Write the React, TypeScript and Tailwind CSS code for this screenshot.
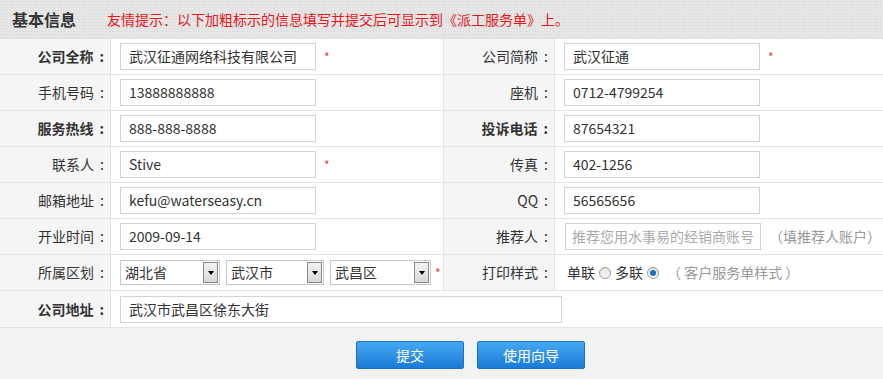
import type { ReactNode } from 'react'

const font = "font-['Microsoft_YaHei','Noto_Sans_CJK_SC',sans-serif]"

function Label({ children, bold }: { children: ReactNode; bold?: boolean }) {
  return (
    <div
      className={`flex items-center justify-end bg-[#f5f5f5] pr-[4px] text-[14px] text-[#333] ${bold ? 'font-bold' : ''}`}
    >
      {children}
      <span className="ml-[6px] mr-[2px]">:</span>
    </div>
  )
}

function Field({ value, star, placeholder }: { value?: string; star?: boolean; placeholder?: string }) {
  return (
    <div className="flex items-center bg-white pl-[9px]">
      <div className="flex h-[27px] w-[196px] items-center border border-[#d3d3d3] bg-white pl-[8px] text-[14px] text-[#333]">
        {value ?? <span className="text-[#aaa]">{placeholder}</span>}
      </div>
      {star && <span className="ml-[8px] text-[12px] text-[#e04040]">*</span>}
    </div>
  )
}

function Select({ value, w }: { value: string; w: string }) {
  return (
    <div className={`flex h-[25px] items-center justify-between border border-[#c8c8c8] bg-white pl-[4px] text-[14px] text-[#333] ${w}`}>
      <span>{value}</span>
      <span className="mr-[1px] flex h-[21px] w-[15px] items-center justify-center border border-[#888] bg-gradient-to-b from-[#f4f4f4] to-[#d8d8d8]">
        <span className="h-0 w-0 border-x-[3.5px] border-t-[4px] border-x-transparent border-t-black" />
      </span>
    </div>
  )
}

function Radio({ checked }: { checked?: boolean }) {
  return (
    <span className="mx-[4px] inline-flex h-[12px] w-[12px] items-center justify-center rounded-full border border-[#9a9a9a] bg-gradient-to-b from-[#e2e2e2] to-[#fafafa]">
      {checked && <span className="h-[6px] w-[6px] rounded-full bg-[#1c6fc0]" />}
    </span>
  )
}

const rows: [string, string, boolean, boolean, string, string, boolean, boolean][] = [
  ['公司全称', '武汉征通网络科技有限公司', true, true, '公司简称', '武汉征通', false, true],
  ['手机号码', '13888888888', false, false, '座机', '0712-4799254', false, false],
  ['服务热线', '888-888-8888', true, false, '投诉电话', '87654321', true, false],
  ['联系人', 'Stive', false, true, '传真', '402-1256', false, false],
  ['邮箱地址', 'kefu@waterseasy.cn', false, false, 'QQ', '56565656', false, false],
]

export default function App() {
  return (
    <div className={`w-[883px] h-[379px] overflow-hidden bg-[#f2f2f2] ${font}`}>
      <div className="flex h-[38px] items-center bg-[#e6e6e6] bg-[radial-gradient(#d6d6d6_0.6px,transparent_0.8px)] bg-size-[3px_3px] pl-[12px]">
        <span className="text-[16px] font-bold text-[#333]">基本信息</span>
        <span className="ml-[31px] text-[14px] text-[#e5171d]">友情提示：以下加粗标示的信息填写并提交后可显示到《派工服务单》上。</span>
      </div>

      <div className="grid grid-cols-[110px_332px_110px_1fr] gap-x-px gap-y-px border-y border-[#e3e3e3] bg-[#e3e3e3]">
        {rows.map((r) => (
          <div key={r[0]} className="contents">
            <div className="grid h-[35px] grid-cols-subgrid col-span-2 gap-x-px">
              <Label bold={r[2]}>{r[0]}</Label>
              <Field value={r[1]} star={r[3]} />
            </div>
            <div className="grid h-[35px] grid-cols-subgrid col-span-2 gap-x-px">
              <Label bold={r[6]}>{r[4]}</Label>
              <Field value={r[5]} star={r[7]} />
            </div>
          </div>
        ))}

        <Label>开业时间</Label>
        <Field value="2009-09-14" />
        <Label>推荐人</Label>
        <div className="flex h-[35px] items-center bg-white pl-[10px]">
          <div className="flex h-[27px] w-[196px] shrink-0 items-center border border-[#d3d3d3] bg-white pl-[6px] text-[14px] text-[#aaa]">
            推荐您用水事易的经销商账号
          </div>
          <span className="ml-[8px] whitespace-nowrap text-[14px] text-[#999]">（填推荐人账户）</span>
        </div>

        <Label>所属区划</Label>
        <div className="flex h-[35px] items-center gap-[6px] bg-white pl-[9px]">
          <Select value="湖北省" w="w-[100px]" />
          <Select value="武汉市" w="w-[98px]" />
          <Select value="武昌区" w="w-[101px]" />
          <span className="-ml-[2px] text-[12px] text-[#e04040]">*</span>
        </div>
        <Label>打印样式</Label>
        <div className="flex h-[35px] items-center bg-white pl-[12px] text-[14px] text-[#333]">
          单联<Radio />多联<Radio checked />
          <span className="ml-[4px] text-[#999]">（ 客户服务单样式 ）</span>
        </div>

        <div className="col-span-4 grid h-[36px] grid-cols-[110px_1fr] gap-x-px">
          <Label bold>公司地址</Label>
          <div className="flex items-center bg-white pl-[9px]">
            <div className="flex h-[27px] w-[442px] items-center border border-[#d3d3d3] bg-white pl-[8px] text-[14px] text-[#333]">
              武汉市武昌区徐东大街
            </div>
          </div>
        </div>
      </div>

      <div className="flex justify-center gap-[13px] pt-[13px] pl-[58px]">
        <button className="h-[28px] w-[108px] rounded-[2px] border border-[#1a73c9] bg-gradient-to-b from-[#45a8f2] to-[#1a7bd8] text-[14px] text-white">
          提交
        </button>
        <button className="h-[28px] w-[108px] rounded-[2px] border border-[#1a73c9] bg-gradient-to-b from-[#45a8f2] to-[#1a7bd8] text-[14px] text-white">
          使用向导
        </button>
      </div>
    </div>
  )
}
